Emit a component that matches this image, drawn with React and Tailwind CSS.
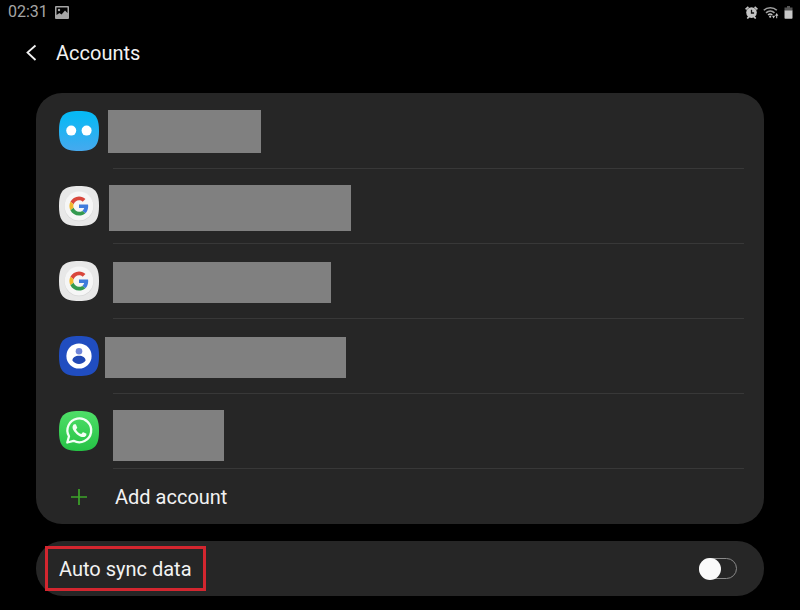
import { useState } from 'react';

const SQUIRCLE = 'M20 0C35.4 0 40 4.6 40 20S35.4 40 20 40 0 35.4 0 20 4.6 0 20 0Z';

function DotsIcon() {
    return (
        <svg viewBox="0 0 40 40" className="mt-px h-10 w-10" aria-hidden="true">
            <defs>
                <linearGradient id="dots-bg" x1="0" y1="0" x2="0" y2="1">
                    <stop offset="0.1" stopColor="#08b9f5" />
                    <stop offset="1" stopColor="#46a9ee" />
                </linearGradient>
            </defs>
            <path d={SQUIRCLE} fill="url(#dots-bg)" />
            <circle cx="12.2" cy="19.6" r="5" fill="#fff" />
            <circle cx="27.6" cy="19.6" r="5" fill="#fff" />
        </svg>
    );
}

function GoogleIcon() {
    return (
        <svg viewBox="0 0 40 40" className="mt-px h-10 w-10" aria-hidden="true">
            <path d={SQUIRCLE} fill="#e8e8e8" />
            <circle cx="20" cy="20.6" r="14.6" fill="#d6d6d6" />
            <circle cx="20" cy="20" r="14.4" fill="#f6f6f6" />
            <g transform="translate(10.4 10.4) scale(0.4)">
                <path fill="#d9473c" d="M24 9.5c3.54 0 6.71 1.22 9.21 3.6l6.85-6.85C35.9 2.38 30.47 0 24 0 14.62 0 6.51 5.38 2.56 13.22l7.98 6.19C12.43 13.72 17.74 9.5 24 9.5z" />
                <path fill="#3f7bdc" d="M46.98 24.55c0-1.57-.15-3.09-.38-4.55H24v9.02h12.94c-.58 2.96-2.26 5.48-4.78 7.18l7.73 6c4.51-4.18 7.09-10.36 7.09-17.65z" />
                <path fill="#f2b92c" d="M10.53 28.59c-.48-1.45-.76-2.99-.76-4.59s.27-3.14.76-4.59l-7.98-6.19C.92 16.46 0 20.12 0 24c0 3.88.92 7.54 2.56 10.78l7.97-6.19z" />
                <path fill="#349a50" d="M24 48c6.48 0 11.93-2.13 15.89-5.81l-7.73-6c-2.15 1.45-4.92 2.3-8.16 2.3-6.26 0-11.57-4.22-13.47-9.91l-7.98 6.19C6.51 42.62 14.62 48 24 48z" />
            </g>
        </svg>
    );
}

function SamsungIcon() {
    return (
        <svg viewBox="0 0 40 40" className="mt-px h-10 w-10" aria-hidden="true">
            <path d={SQUIRCLE} fill="#204dc0" />
            <circle cx="20" cy="20" r="12.6" fill="#fff" />
            <circle cx="20" cy="15.2" r="3.3" fill="#6f85d8" />
            <path d="M13.4 24.6c0-3 3-4.8 6.6-4.8s6.6 1.8 6.6 4.8c-1.5 2.2-4 3.4-6.6 3.400s-5.1-1.200-6.600-3.400z" fill="#2149b5" />
        </svg>
    );
}

function WhatsAppIcon() {
    return (
        <svg viewBox="0 0 40 40" className="mt-px h-10 w-10" aria-hidden="true">
            <defs>
                <linearGradient id="wa-bg" x1="0" y1="0" x2="0" y2="1">
                    <stop offset="0" stopColor="#4fdf68" />
                    <stop offset="1" stopColor="#25c245" />
                </linearGradient>
            </defs>
            <path d={SQUIRCLE} fill="url(#wa-bg)" />
            <path d="M8.3 31.5l1.7-6.2a11.9 11.9 0 1 1 4.6 4.5z" fill="none" stroke="#f2fff4" strokeWidth="2.3" strokeLinejoin="round" />
            <path
                transform="translate(6.6 5.8) scale(1.15)"
                d="M17.5 14.4c-.3-.15-1.76-.87-2.03-.97-.27-.1-.47-.15-.67.15-.2.3-.77.97-.94 1.16-.17.2-.35.22-.64.08-.3-.15-1.26-.46-2.39-1.47-.88-.79-1.48-1.76-1.65-2.06-.17-.3-.02-.46.13-.6.13-.14.3-.35.45-.52.15-.17.2-.3.3-.5.1-.2.05-.37-.03-.52-.07-.15-.67-1.61-.91-2.21-.24-.58-.49-.5-.67-.51h-.57c-.2 0-.52.07-.79.37-.27.3-1.04 1.02-1.04 2.48s1.07 2.88 1.21 3.07c.15.2 2.1 3.2 5.08 4.49.71.3 1.26.49 1.69.63.71.22 1.36.19 1.87.12.57-.09 1.76-.72 2.01-1.41.25-.7.25-1.29.17-1.42-.07-.12-.27-.2-.57-.35z"
                fill="#f2fff4"
            />
        </svg>
    );
}

const accounts = [
    { id: 1, name: 'Dots account', Icon: DotsIcon, mask: 'ml-[9px] h-[43px] w-[153px]' },
    { id: 2, name: 'Google account', Icon: GoogleIcon, mask: 'ml-[10px] h-[46px] w-[242px]' },
    { id: 3, name: 'Second Google account', Icon: GoogleIcon, mask: 'ml-[14px] mt-[2px] h-[41px] w-[218px]' },
    { id: 4, name: 'Samsung account', Icon: SamsungIcon, mask: 'ml-[6px] mt-[2px] h-[41px] w-[241px]' },
    { id: 5, name: 'WhatsApp account', Icon: WhatsAppIcon, mask: 'ml-[14px] h-[51px] w-[111px]' },
];

function StatusBar() {
    return (
        <div className="flex h-6 items-center justify-between pl-2 pr-[7px] text-[#a6a6a6]">
            <div className="flex items-center gap-[7px]">
                <span className="text-base leading-6">02:31</span>
                <svg viewBox="0 0 14 13" className="h-[13px] w-[14px]" aria-hidden="true">
                    <path fill="currentColor" fillRule="evenodd" d="M1 0h12a1 1 0 0 1 1 1v11a1 1 0 0 1-1 1H1a1 1 0 0 1-1-1V1a1 1 0 0 1 1-1zm.5 1.5v7.5l3-2 2 1.5 3.5-4 2.5 2.5V1.500z" />
                    <circle cx="4" cy="4" r="1.2" fill="currentColor" />
                </svg>
            </div>
            <div className="flex items-center gap-[5px]">
                <svg viewBox="0 0 13 13" className="h-[13px] w-[13px]" aria-hidden="true">
                    <path d="M.6 3.400L3.400.8M12.400 3.400L9.600.8M2.300 12.500l1.700-1.800M10.700 12.500L9 10.700" stroke="#c4c4c4" strokeWidth="1.700" />
                    <circle cx="6.5" cy="6.6" r="5.3" fill="#c4c4c4" />
                    <path d="M6.5 3.800V7h2.600" fill="none" stroke="#111" strokeWidth="1.300" />
                </svg>
                <svg viewBox="0 0 16 13" className="h-[13px] w-4" aria-hidden="true">
                    <path d="M.8 4.3c3.5-3.5 9.500-3.500 13 0M3 6.800c2.500-2.300 6-2.300 8.500 0" fill="none" stroke="#a0a0a0" strokeWidth="1.600" />
                    <path d="M5 9c1.300-1.200 3-1.200 4.300 0" fill="none" stroke="#c4c4c4" strokeWidth="1.400" />
                    <circle cx="7.2" cy="10.7" r="1.1" fill="#c4c4c4" />
                    <path d="M9 9.700h3.200l-1.600 2.700zM12 9.800l1.700-2.800 1.700 2.800zM13.200 9h1v3.200h-1z" fill="#c4c4c4" />
                </svg>
                <svg viewBox="0 0 9 13" className="h-[13px] w-[9px]" aria-hidden="true">
                    <path d="M3 0h3v1.500h2.500V5h-8V1.500H3z" fill="#555" />
                    <path d="M.5 4.500h8V12a.8.800 0 0 1-.8.800H1.300a.8.800 0 0 1-.8-.8z" fill="#c8c8c8" />
                </svg>
            </div>
        </div>
    );
}

function AccountRow({ name, Icon, mask }) {
    return (
        <li className="flex h-[75px] flex-col">
            <div className="flex flex-1 items-start pl-[23px] pt-4">
                <Icon />
                <div role="img" aria-label={name} className={`bg-[#808080] ${mask}`} />
            </div>
            <hr className="ml-[77px] mr-5 border-t border-[#383838]" />
        </li>
    );
}

export default function App() {
    const [autoSync, setAutoSync] = useState(false);

    return (
        <div className="min-h-screen bg-black font-['Roboto',sans-serif] text-[#f2f2f2]">
            <StatusBar />
            <header className="flex h-[58px] items-center pl-5">
                <button type="button" aria-label="Back" className="flex h-6 w-6 items-center justify-center">
                    <svg viewBox="0 0 24 24" className="h-6 w-6" fill="none" stroke="currentColor" strokeWidth="1.8" aria-hidden="true">
                        <path d="M15.5 4.500L7.500 11.500l8 7.500" />
                    </svg>
                </button>
                <h1 className="pl-3 text-xl leading-6">Accounts</h1>
            </header>

            <main className="flex flex-col gap-[17px] px-9 pt-[11px]">
                <section className="rounded-[26px] bg-[#262626] pt-px">
                    <ul>
                        {accounts.map((account) => (
                            <AccountRow key={account.id} {...account} />
                        ))}
                    </ul>
                    <button type="button" className="flex h-[55px] w-full items-center pl-[35px] text-left text-xl">
                        <svg viewBox="0 0 16 16" className="h-4 w-4" stroke="#3da52a" strokeWidth="1.7" aria-hidden="true">
                            <path d="M8 0v16M0 8h16" />
                        </svg>
                        <span className="pl-7">Add account</span>
                    </button>
                </section>

                <section className="flex h-[55px] items-center justify-between rounded-[27px] bg-[#262626] pl-[9px] pr-[27px]">
                    <label htmlFor="auto-sync" className="flex h-[45px] items-center border-[3px] border-[#d3262f] px-[11px] text-xl">
                        Auto sync data
                    </label>
                    <input
                        id="auto-sync"
                        type="checkbox"
                        role="switch"
                        checked={autoSync}
                        onChange={(e) => setAutoSync(e.target.checked)}
                        className="flex h-[21px] w-[38px] appearance-none items-center rounded-full border border-[#8a8a8a] before:-ml-px before:h-[22px] before:w-[22px] before:shrink-0 before:rounded-full before:bg-[#fafafa] checked:justify-end checked:bg-[#3da52a]"
                    />
                </section>
            </main>
        </div>
    );
}
